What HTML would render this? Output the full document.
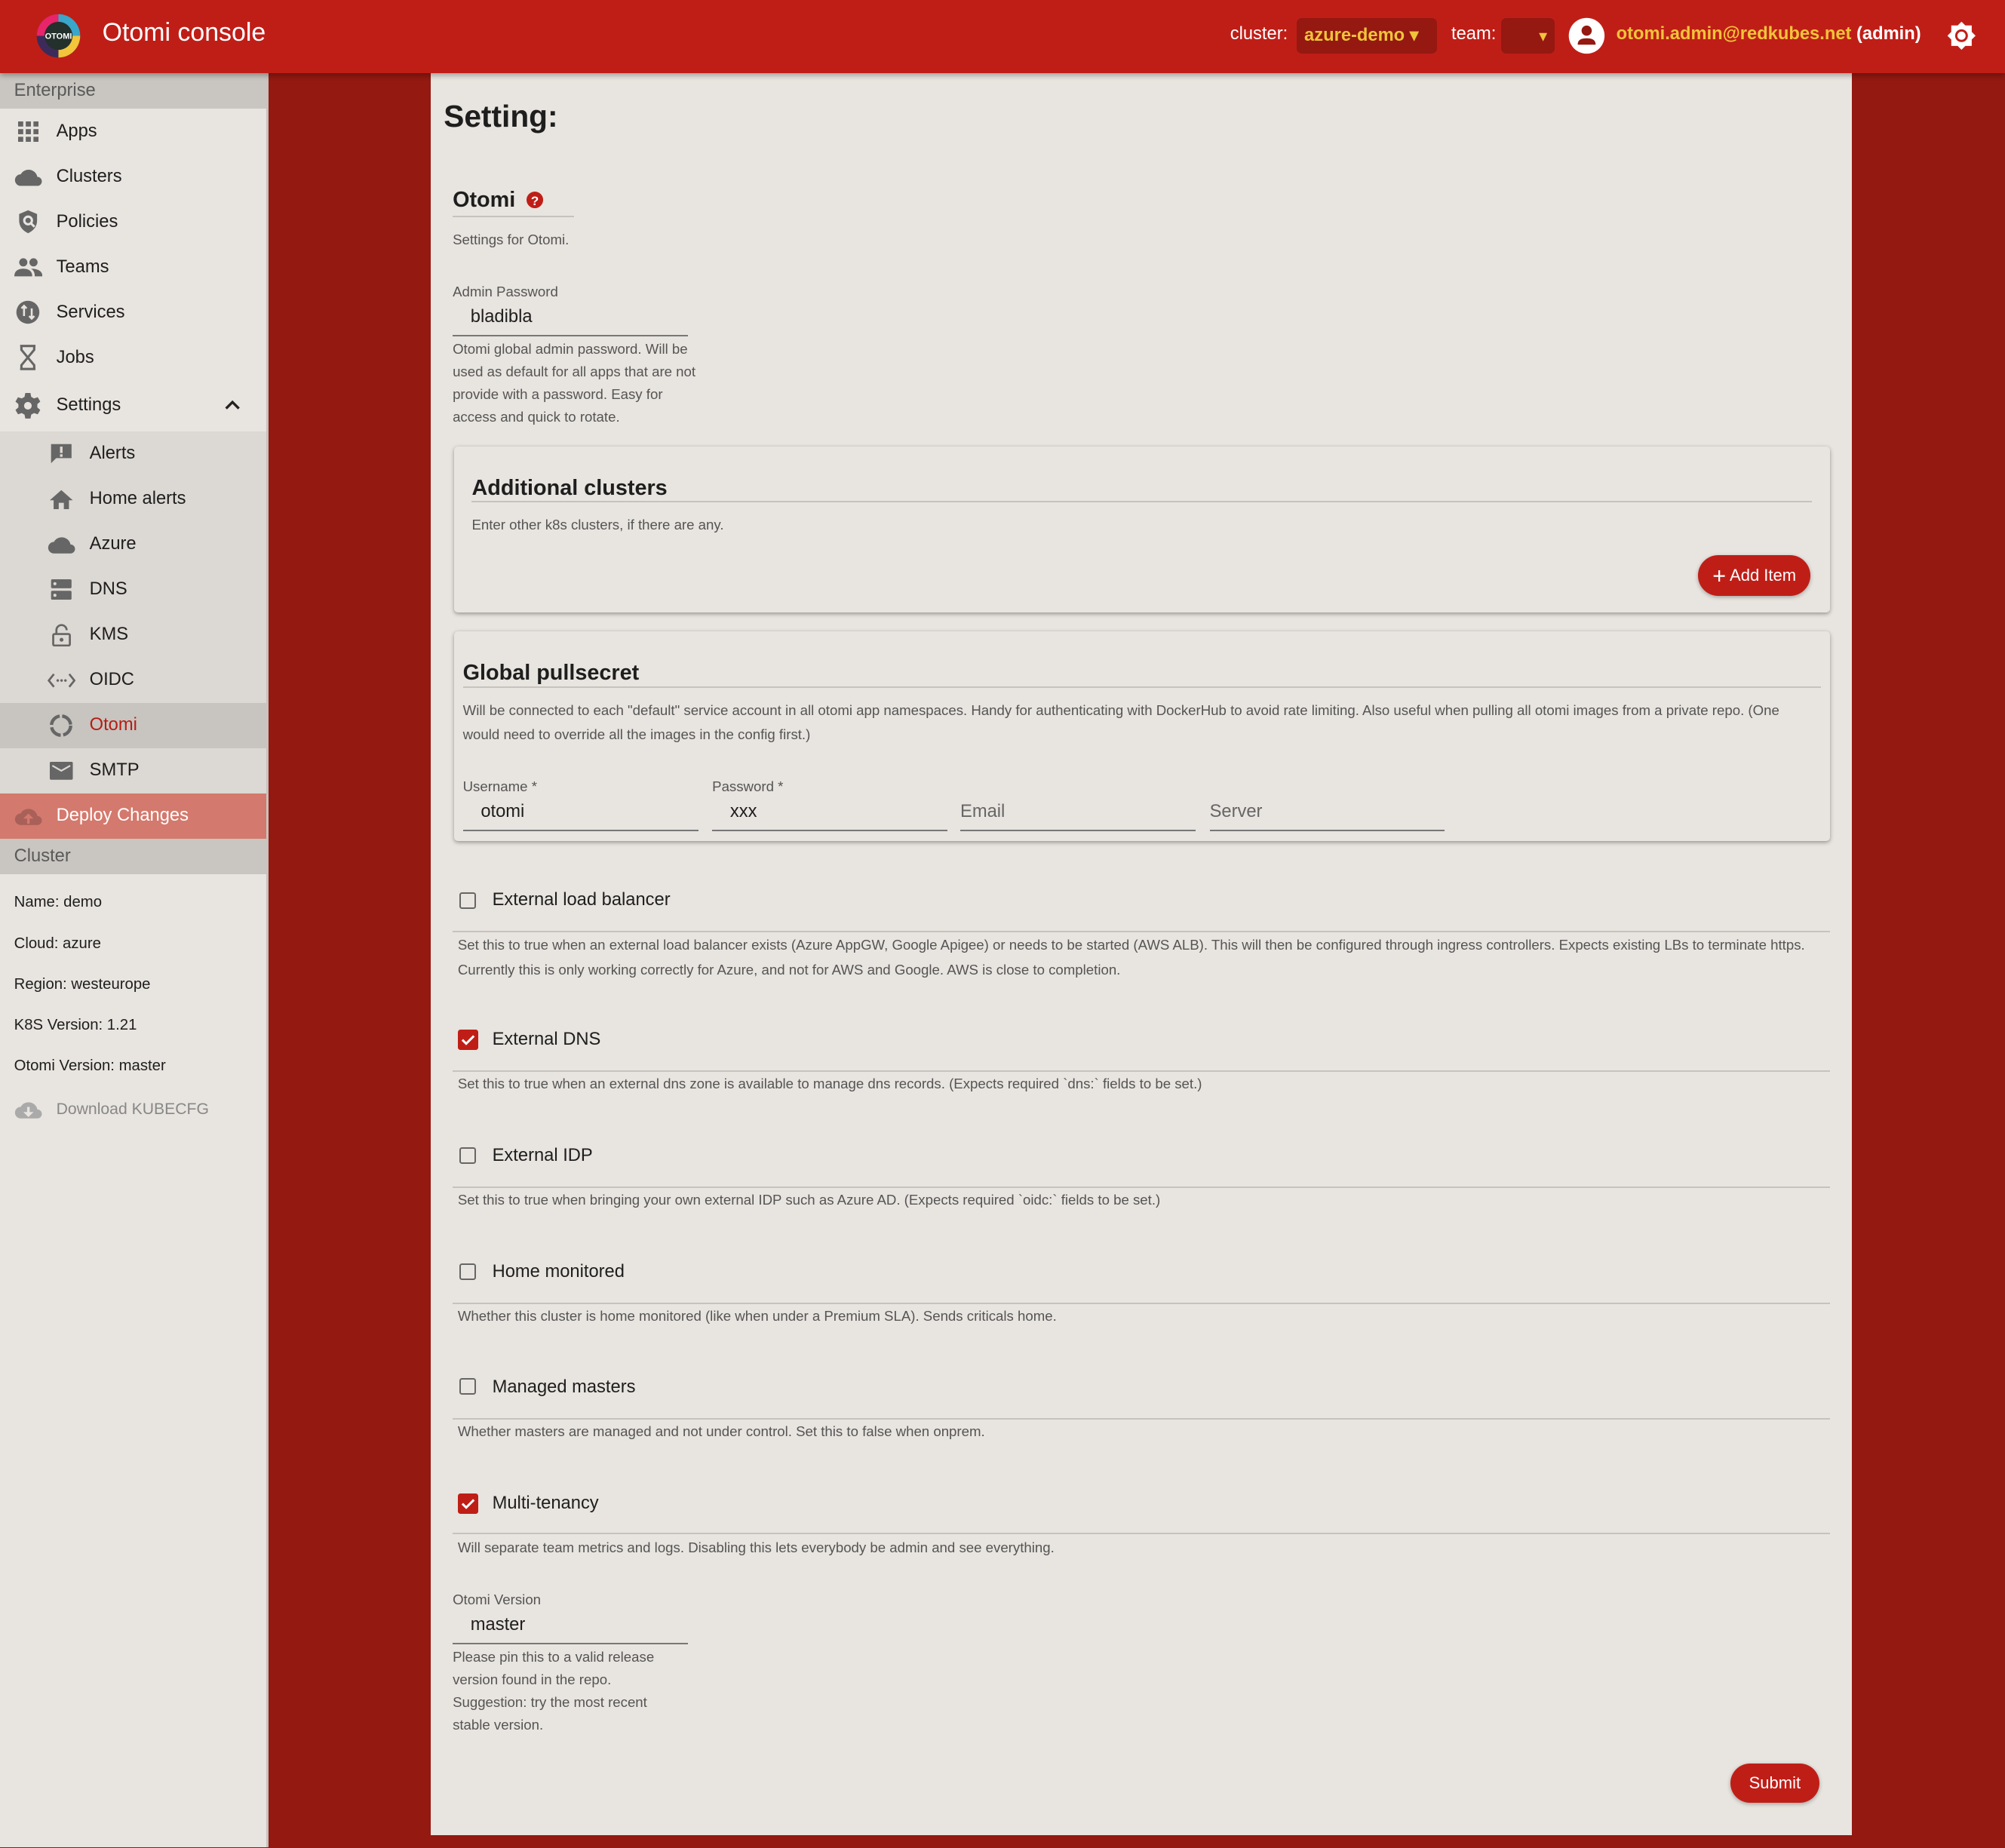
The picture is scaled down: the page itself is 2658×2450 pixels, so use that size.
<!DOCTYPE html>
<html><head><meta charset="utf-8"><style>
html,body{margin:0;padding:0;width:2658px;height:2450px;overflow:hidden;background:#931911}
#z{zoom:1.69515;width:1568px;height:1445px;position:relative;font-family:"Liberation Sans",sans-serif;color:#1e1e1e}
.a{position:absolute}
#hd{left:0;top:0;width:1568px;height:57px;background:#bf1e17;box-shadow:0 2px 4px rgba(0,0,0,.3);z-index:3}
#sb{left:0;top:57px;width:208px;height:1388px;background:#e8e4df}
.sec{background:#c9c5c0;color:#5a5a5a;font-size:14px;padding-left:11px;height:28px;line-height:28px}
.it{height:35.4px;display:flex;align-items:center;font-size:14px}
.it .ic{width:44px;display:flex;justify-content:center;align-items:center}
.sub{background:#dcd8d3}
.sub .it{padding-left:26px}
#mp{left:337px;top:57px;width:1111px;height:1378px;background:#e8e4df}
.sm{font-size:11px;color:#555}
.card{background:#e8e4df;border-radius:3px;box-shadow:0 1px 3px rgba(0,0,0,.35)}
.h2{font-size:17px;font-weight:bold}
.ul{border-bottom:1.5px solid #c6c2bd}
.inp{border-bottom:1.5px solid #777;font-size:14px}
.cb{width:13px;height:13px;border:1.6px solid #666;border-radius:2px;box-sizing:border-box}
.cbc{width:16px;height:16px;background:#bf1e17;border-radius:2px}
.btn{background:#bf1e17;color:#fff;border-radius:16px;font-size:13px;text-align:center;box-shadow:0 1px 3px rgba(0,0,0,.3)}
</style></head><body><div id="z">
<div id="hd" class="a">
 <svg class="a" style="left:28px;top:10px" width="36" height="36" viewBox="0 0 36 36"><circle cx="18" cy="18" r="17" fill="#2a3140"/><path d="M18 1a17 17 0 0 1 17 17H18z" fill="#3aa6c9"/><path d="M1 18A17 17 0 0 1 18 1v17z" fill="#e8246a"/><path d="M18 35A17 17 0 0 1 1 18h17z" fill="#3c2b5a"/><path d="M35 18a17 17 0 0 1-17 17V18z" fill="#f2c53b"/><circle cx="18" cy="18" r="11" fill="#23302c"/><text x="18" y="20.5" font-size="6.5" font-weight="bold" fill="#fff" text-anchor="middle" font-family="Liberation Sans">OTOMI</text></svg>
 <div class="a" style="left:80px;top:14px;font-size:20px;color:#fff">Otomi console</div>
 <div class="a" style="left:962px;top:19px;font-size:14px;color:#fff">cluster:</div>
 <div class="a" style="left:1014px;top:14px;width:110px;height:28px;background:#951811;border-radius:4px"></div>
 <div class="a" style="left:1020px;top:19px;font-size:14px;color:#f0c43a;font-weight:bold">azure-demo ▾</div>
 <div class="a" style="left:1135px;top:19px;font-size:14px;color:#fff">team:</div>
 <div class="a" style="left:1174px;top:14px;width:42px;height:28px;background:#951811;border-radius:4px;color:#f0c43a;font-size:13px;line-height:28px;text-align:right;box-sizing:border-box;padding-right:6px">▾</div>
 <svg class="a" style="left:1226px;top:13px" width="30" height="30" viewBox="0 0 30 30"><circle cx="15" cy="15" r="14" fill="#fff"/><circle cx="15" cy="11" r="4" fill="#951811"/><path d="M8 22c0-4 3-5 7-5s7 1 7 5z" fill="#951811"/></svg>
 <div class="a" style="left:1264px;top:19px;font-size:14px;font-weight:bold;color:#f0c43a">otomi.admin@redkubes.net <span style="color:#fff">(admin)</span></div>
 <svg class="a" style="left:1522px;top:16px" width="24" height="24" viewBox="0 0 24 24"><path d="M12 1l3 3h5v5l3 3-3 3v5h-5l-3 3-3-3H4v-5l-3-3 3-3V4h5z" fill="#fff"/><circle cx="12" cy="12" r="5" fill="#bf1e17"/><circle cx="12" cy="12" r="3.2" fill="#fff"/></svg>
</div>
<div id="sb" class="a">
 <div class="sec">Enterprise</div>
 <div style="padding-top:0">
 <div class="it"><span class="ic"><svg width="16" height="16"><g fill="#666"><rect x="0" y="0" width="4" height="4"/><rect x="6" y="0" width="4" height="4"/><rect x="12" y="0" width="4" height="4"/><rect x="0" y="6" width="4" height="4"/><rect x="6" y="6" width="4" height="4"/><rect x="12" y="6" width="4" height="4"/><rect x="0" y="12" width="4" height="4"/><rect x="6" y="12" width="4" height="4"/><rect x="12" y="12" width="4" height="4"/></g></svg></span>Apps</div>
 <div class="it"><span class="ic"><svg width="22" height="16"><path d="M5 15a4.5 4.5 0 0 1 0-9 7 7 0 0 1 13 2 3.5 3.5 0 0 1 0 7z" fill="#666"/></svg></span>Clusters</div>
 <div class="it"><span class="ic"><svg width="18" height="20"><path d="M9 1l7 3v5c0 5-3 8-7 10-4-2-7-5-7-10V4z" fill="#666"/><circle cx="9" cy="9" r="3" fill="none" stroke="#e8e4df" stroke-width="1.8"/><path d="M11 11l3 3" stroke="#e8e4df" stroke-width="1.8"/></svg></span>Policies</div>
 <div class="it"><span class="ic"><svg width="22" height="16"><circle cx="7" cy="4" r="3.2" fill="#666"/><circle cx="15" cy="4" r="3.2" fill="#666"/><path d="M0 15c0-5 4-6 7-6s7 1 7 6z" fill="#666"/><path d="M13 9c4 0 9 1 9 6h-6c0-3-1-5-3-6z" fill="#666"/></svg></span>Teams</div>
 <div class="it"><span class="ic"><svg width="20" height="20"><circle cx="10" cy="10" r="9" fill="#666"/><path d="M7 5v8M5 7l2-2 2 2M13 15V7M11 13l2 2 2-2" stroke="#e8e4df" stroke-width="1.5" fill="none"/></svg></span>Services</div>
 <div class="it"><span class="ic"><svg width="14" height="20"><path d="M1 1h12M1 19h12M2 1v3l5 6-5 6v3M12 1v3l-5 6 5 6v3" stroke="#666" stroke-width="1.8" fill="none"/></svg></span>Jobs</div>
 <div class="it" style="height:40px;position:relative"><span class="ic"><svg width="20" height="20" viewBox="0 0 20 20"><path d="M8 0h4l.6 3 2.2 1.3 2.9-1 2 3.4-2.3 2v2.6l2.3 2-2 3.4-2.9-1L12.6 17 12 20H8l-.6-3-2.2-1.3-2.9 1-2-3.4 2.3-2V8.7L.3 6.7l2-3.4 2.9 1L7.4 3z" fill="#666"/><circle cx="10" cy="10" r="3" fill="#e8e4df"/></svg></span>Settings<svg class="a" style="left:176px;top:14px" width="12" height="10"><path d="M1 8l5-5 5 5" stroke="#222" stroke-width="2" fill="none"/></svg></div>
 </div>
 <div class="sub">
 <div class="it"><span class="ic"><svg width="18" height="17"><path d="M1 1h16v11H5l-4 4z" fill="#666"/><rect x="8" y="3" width="2" height="5" fill="#dcd8d3"/><rect x="8" y="9" width="2" height="2" fill="#dcd8d3"/></svg></span>Alerts</div>
 <div class="it"><span class="ic"><svg width="18" height="16"><path d="M9 1l9 8h-3v7h-4v-5H7v5H3V9H0z" fill="#666"/></svg></span>Home alerts</div>
 <div class="it"><span class="ic"><svg width="22" height="14"><path d="M5 14a4.5 4.5 0 0 1 0-9 7 7 0 0 1 13 2 3.5 3.5 0 0 1 0 7z" fill="#666"/></svg></span>Azure</div>
 <div class="it"><span class="ic"><svg width="18" height="16"><rect x="1" y="0" width="16" height="7" rx="1" fill="#666"/><rect x="1" y="9" width="16" height="7" rx="1" fill="#666"/><circle cx="4" cy="3.5" r="1.2" fill="#dcd8d3"/><circle cx="4" cy="12.5" r="1.2" fill="#dcd8d3"/></svg></span>DNS</div>
 <div class="it"><span class="ic"><svg width="16" height="18"><path d="M4 8V5a4 4 0 0 1 8 0" stroke="#666" stroke-width="1.6" fill="none"/><rect x="1.5" y="8" width="13" height="9" rx="1" stroke="#666" stroke-width="1.6" fill="none"/><circle cx="8" cy="12.5" r="1.5" fill="#666"/></svg></span>KMS</div>
 <div class="it"><span class="ic"><svg width="22" height="12"><path d="M5 1L1 6l4 5M17 1l4 5-4 5" stroke="#666" stroke-width="1.6" fill="none"/><circle cx="8" cy="6" r="1" fill="#666"/><circle cx="11" cy="6" r="1" fill="#666"/><circle cx="14" cy="6" r="1" fill="#666"/></svg></span>OIDC</div>
 <div class="it" style="background:#c8c4bf;color:#b41d15"><span class="ic"><svg width="20" height="20"><circle cx="10" cy="10" r="7.5" stroke="#666" stroke-width="2.6" fill="none" stroke-dasharray="10 2"/></svg></span>Otomi</div>
 <div class="it"><span class="ic"><svg width="18" height="14"><rect x="0" y="0" width="18" height="14" rx="1" fill="#666"/><path d="M2 3l7 4 7-4" stroke="#dcd8d3" stroke-width="1.3" fill="none"/></svg></span>SMTP</div>
 </div>
 <div class="it" style="background:#d4796d;color:#fff;padding-left:0"><span class="ic"><svg width="22" height="14"><path d="M5 14a4.5 4.5 0 0 1 0-9 7 7 0 0 1 13 2 3.5 3.5 0 0 1 0 7z" fill="#a86058"/><path d="M11 5l-4 4h3v4h2V9h3z" fill="#d4796d"/></svg></span>Deploy Changes</div>
 <div class="sec">Cluster</div>
 <div style="font-size:12px;padding-left:11px;line-height:32px;padding-top:6px">Name: demo<br>Cloud: azure<br>Region: westeurope<br>K8S Version: 1.21<br>Otomi Version: master</div>
 <div class="it" style="color:#888;font-size:12.5px"><span class="ic"><svg width="22" height="14"><path d="M5 14a4.5 4.5 0 0 1 0-9 7 7 0 0 1 13 2 3.5 3.5 0 0 1 0 7z" fill="#aaa"/><path d="M11 13l-4-4h3V5h2v4h3z" fill="#e8e4df"/></svg></span>Download KUBECFG</div>
</div>
<div class="a" style="left:208px;top:57px;width:2px;height:1388px;background:#c6c2bd"></div>
<div id="mp" class="a">
 <div class="a" style="left:10px;top:20px;font-size:24px;font-weight:bold">Setting:</div>
 <div class="a ul" style="left:17px;top:90px;width:95px;height:22px"><span class="h2">Otomi</span> <svg width="13" height="13" style="vertical-align:-1px;margin-left:4px"><circle cx="6.5" cy="6.5" r="6.5" fill="#bf1e17"/><text x="6.5" y="10.5" font-size="10" font-weight="bold" fill="#fff" text-anchor="middle" font-family="Liberation Sans">?</text></svg></div>
 <div class="a sm" style="left:17px;top:124px">Settings for Otomi.</div>
 <div class="a sm" style="left:17px;top:165px">Admin Password</div>
 <div class="a inp" style="left:17px;top:183px;width:184px;height:23px;box-sizing:border-box;padding-left:14px">bladibla</div>
 <div class="a sm" style="left:17px;top:207px;width:190px;line-height:17.7px">Otomi global admin password. Will be used as default for all apps that are not provide with a password. Easy for access and quick to rotate.</div>
 <div class="a card" style="left:18px;top:292px;width:1076px;height:130px">
  <div class="a ul h2" style="left:14px;top:23px;width:1048px;height:20px">Additional clusters</div>
  <div class="a sm" style="left:14px;top:55px">Enter other k8s clusters, if there are any.</div>
  <div class="a btn" style="left:973px;top:85px;width:88px;height:32px;line-height:32px"><b style="font-size:18px;font-weight:normal;vertical-align:-2px">+</b> Add Item</div>
 </div>
 <div class="a card" style="left:18px;top:437px;width:1076px;height:164px">
  <div class="a ul h2" style="left:7px;top:23px;width:1062px;height:20px">Global pullsecret</div>
  <div class="a sm" style="left:7px;top:52px;width:1060px;line-height:19px">Will be connected to each "default" service account in all otomi app namespaces. Handy for authenticating with DockerHub to avoid rate limiting. Also useful when pulling all otomi images from a private repo. (One would need to override all the images in the config first.)</div>
  <div class="a sm" style="left:7px;top:115px">Username *</div>
  <div class="a sm" style="left:202px;top:115px">Password *</div>
  <div class="a inp" style="left:7px;top:133px;width:184px;height:23px;box-sizing:border-box;padding-left:14px">otomi</div>
  <div class="a inp" style="left:202px;top:133px;width:184px;height:23px;box-sizing:border-box;padding-left:14px">xxx</div>
  <div class="a inp" style="left:396px;top:133px;width:184px;height:23px;box-sizing:border-box;color:#666">Email</div>
  <div class="a inp" style="left:591px;top:133px;width:184px;height:23px;box-sizing:border-box;color:#666">Server</div>
 </div>

 <div class="a cb" style="left:22px;top:641px"></div><div class="a" style="left:48px;top:639px;font-size:14px">External load balancer</div>
 <div class="a ul" style="left:17px;top:671px;width:1077px"></div>
 <div class="a sm" style="left:21px;top:673px;width:1070px;line-height:19px">Set this to true when an external load balancer exists (Azure AppGW, Google Apigee) or needs to be started (AWS ALB). This will then be configured through ingress controllers. Expects existing LBs to terminate https. Currently this is only working correctly for Azure, and not for AWS and Google. AWS is close to completion.</div>

 <div class="a cbc" style="left:21px;top:748px"><svg width="16" height="16"><path d="M3.5 8l3 3 6-6" stroke="#fff" stroke-width="1.8" fill="none"/></svg></div><div class="a" style="left:48px;top:748px;font-size:14px">External DNS</div>
 <div class="a ul" style="left:17px;top:780px;width:1077px"></div>
 <div class="a sm" style="left:21px;top:784px">Set this to true when an external dns zone is available to manage dns records. (Expects required `dns:` fields to be set.)</div>

 <div class="a cb" style="left:22px;top:840px"></div><div class="a" style="left:48px;top:839px;font-size:14px">External IDP</div>
 <div class="a ul" style="left:17px;top:871px;width:1077px"></div>
 <div class="a sm" style="left:21px;top:875px">Set this to true when bringing your own external IDP such as Azure AD. (Expects required `oidc:` fields to be set.)</div>

 <div class="a cb" style="left:22px;top:931px"></div><div class="a" style="left:48px;top:930px;font-size:14px">Home monitored</div>
 <div class="a ul" style="left:17px;top:962px;width:1077px"></div>
 <div class="a sm" style="left:21px;top:966px">Whether this cluster is home monitored (like when under a Premium SLA). Sends criticals home.</div>

 <div class="a cb" style="left:22px;top:1021px"></div><div class="a" style="left:48px;top:1020px;font-size:14px">Managed masters</div>
 <div class="a ul" style="left:17px;top:1052px;width:1077px"></div>
 <div class="a sm" style="left:21px;top:1056px">Whether masters are managed and not under control. Set this to false when onprem.</div>

 <div class="a cbc" style="left:21px;top:1111px"><svg width="16" height="16"><path d="M3.5 8l3 3 6-6" stroke="#fff" stroke-width="1.8" fill="none"/></svg></div><div class="a" style="left:48px;top:1111px;font-size:14px">Multi-tenancy</div>
 <div class="a ul" style="left:17px;top:1142px;width:1077px"></div>
 <div class="a sm" style="left:21px;top:1147px">Will separate team metrics and logs. Disabling this lets everybody be admin and see everything.</div>

 <div class="a sm" style="left:17px;top:1188px">Otomi Version</div>
 <div class="a inp" style="left:17px;top:1206px;width:184px;height:23px;box-sizing:border-box;padding-left:14px">master</div>
 <div class="a sm" style="left:17px;top:1230px;width:170px;line-height:17.7px">Please pin this to a valid release version found in the repo. Suggestion: try the most recent stable version.</div>
 <div class="a btn" style="left:1016px;top:1322px;width:70px;height:31px;line-height:31px">Submit</div>
</div>
</div></body></html>
